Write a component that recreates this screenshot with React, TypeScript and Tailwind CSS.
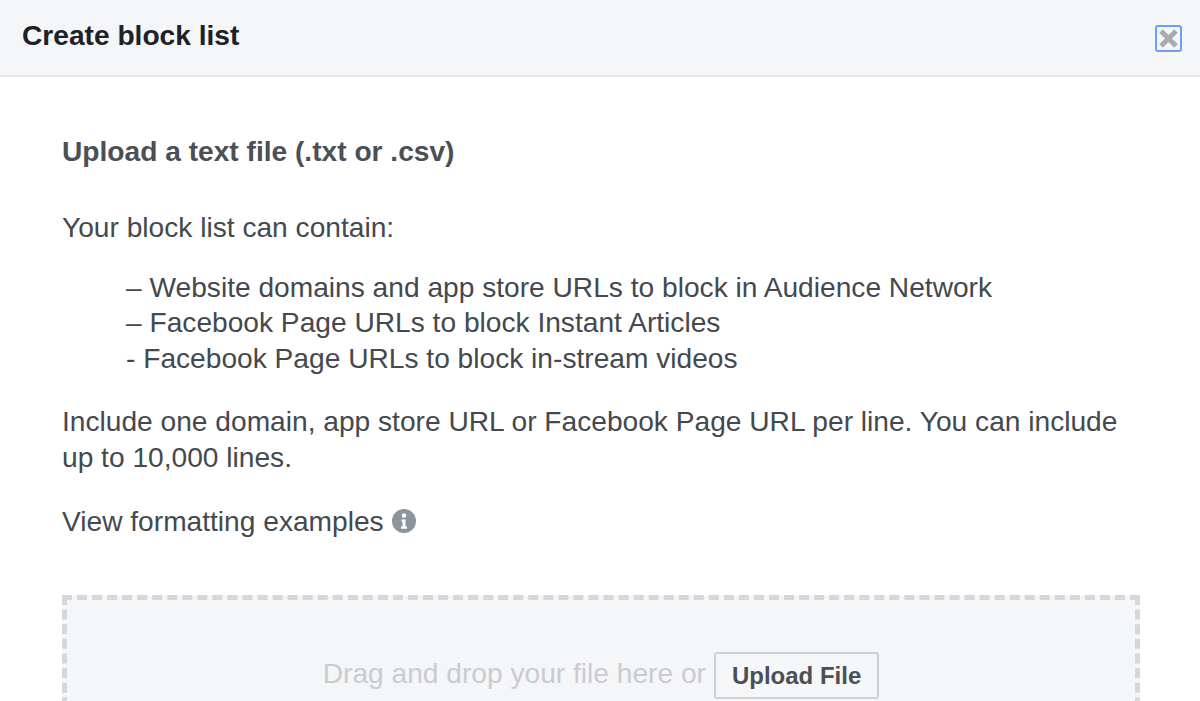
export default function App() {
  return (
    <div className="h-[701px] overflow-hidden bg-white font-['Liberation_Sans',Arial,sans-serif] text-[#4b4f56]">
      {/* Header */}
      <div className="flex h-[77px] items-center justify-between border-b-2 border-[#e5e6e9] bg-[#f5f6f7] pl-[22px] pr-[18px]">
        <h1 className="mt-[-2px] text-[28.15px] font-bold text-[#1d2129]">Create block list</h1>
        <button className="mt-[1px] flex h-[27px] w-[27px] items-center justify-center rounded-[3px] border-2 border-[#6d9eff]">
          <svg width="23" height="23" viewBox="0 0 23 23">
            <path d="M4 4l15 15M19 4l-15 15" stroke="#a9abaf" strokeWidth="5" />
          </svg>
        </button>
      </div>

      {/* Body */}
      <div className="pl-[62px] pr-[60px] pt-[57px]">
        <h2 className="text-[28.15px] font-bold leading-[36px]">Upload a text file (.txt or .csv)</h2>
        <div className="mt-[40px] text-[28.15px] leading-[35.6px] text-[#444950]">
          <p>Your block list can contain:</p>
          <ul className="mt-[24px] pl-[64px]">
            <li>– Website domains and app store URLs to block in Audience Network</li>
            <li>– Facebook Page URLs to block Instant Articles</li>
            <li>- Facebook Page URLs to block in-stream videos</li>
          </ul>
          <p className="mt-[28px]">
            Include one domain, app store URL or Facebook Page URL per line. You can include up to 10,000 lines.
          </p>
          <p className="mt-[28px] flex items-center gap-[8px]">
            View formatting examples
            <svg width="24" height="24" viewBox="0 0 24 24">
              <circle cx="12" cy="12" r="12" fill="#8d949e" />
              <circle cx="12" cy="6.5" r="2.2" fill="#fff" />
              <path d="M9.5 10.5h4v7h1.5v2.2H9v-2.2h1.5v-4.8h-1z" fill="#fff" />
            </svg>
          </p>
        </div>

        {/* Drop zone */}
        <div className="mt-[56px] flex h-[200px] items-start justify-center border-[5px] border-dashed border-[#d5d7db] bg-[#f5f6f7] pt-[52px]">
          <span className="text-[28.15px] leading-[43px] text-[#c9ccd1]">Drag and drop your file here or</span>
          <button className="ml-[8px] h-[47px] rounded-[3px] border-2 border-[#ced0d4] bg-[#f6f7f9] px-[16px] text-[24px] font-bold text-[#4b4f56]">
            Upload File
          </button>
        </div>
      </div>
    </div>
  );
}
